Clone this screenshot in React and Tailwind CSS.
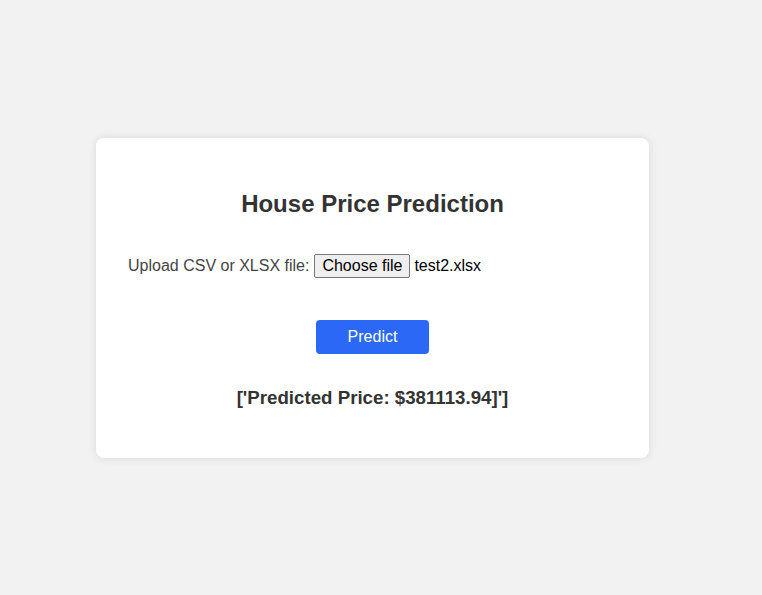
import React from 'react';

const App = () => {
  return (
    <div
      className="min-h-screen w-full bg-[#f2f2f2] flex items-center"
      style={{ fontFamily: '"Liberation Sans", Arial, sans-serif' }}
    >
      {/* Card */}
      <div className="ml-[96px] w-[553px] h-[320px] bg-white rounded-lg shadow-[0_0_10px_rgba(0,0,0,0.1)] px-8 pt-[52px]">
        <h2 className="text-center text-[24px] leading-[28px] font-bold text-[#333]">
          House Price Prediction
        </h2>

        {/* Upload row */}
        <div className="mt-[36px] flex items-center h-6 text-[16px] leading-[18px]">
          <span className="text-[#444]">Upload CSV or XLSX file:</span>
          <span className="ml-[5px] h-6 w-[96px] flex items-center justify-center bg-[#efefef] border border-[#767676] rounded-[2px] text-black">
            Choose file
          </span>
          <span className="ml-[4px] text-black">test2.xlsx</span>
        </div>

        {/* Predict button */}
        <div className="mt-[42px] flex justify-center">
          <button
            type="button"
            className="w-[113px] h-[34px] bg-[#2a68f5] text-white text-[16px] rounded-[4px] flex items-center justify-center"
          >
            Predict
          </button>
        </div>

        {/* Result */}
        <h3 className="mt-[33px] text-center text-[18.7px] leading-[21px] font-bold text-[#333]">
          ['Predicted Price: $381113.94]']
        </h3>
      </div>
    </div>
  );
};

export default App;
